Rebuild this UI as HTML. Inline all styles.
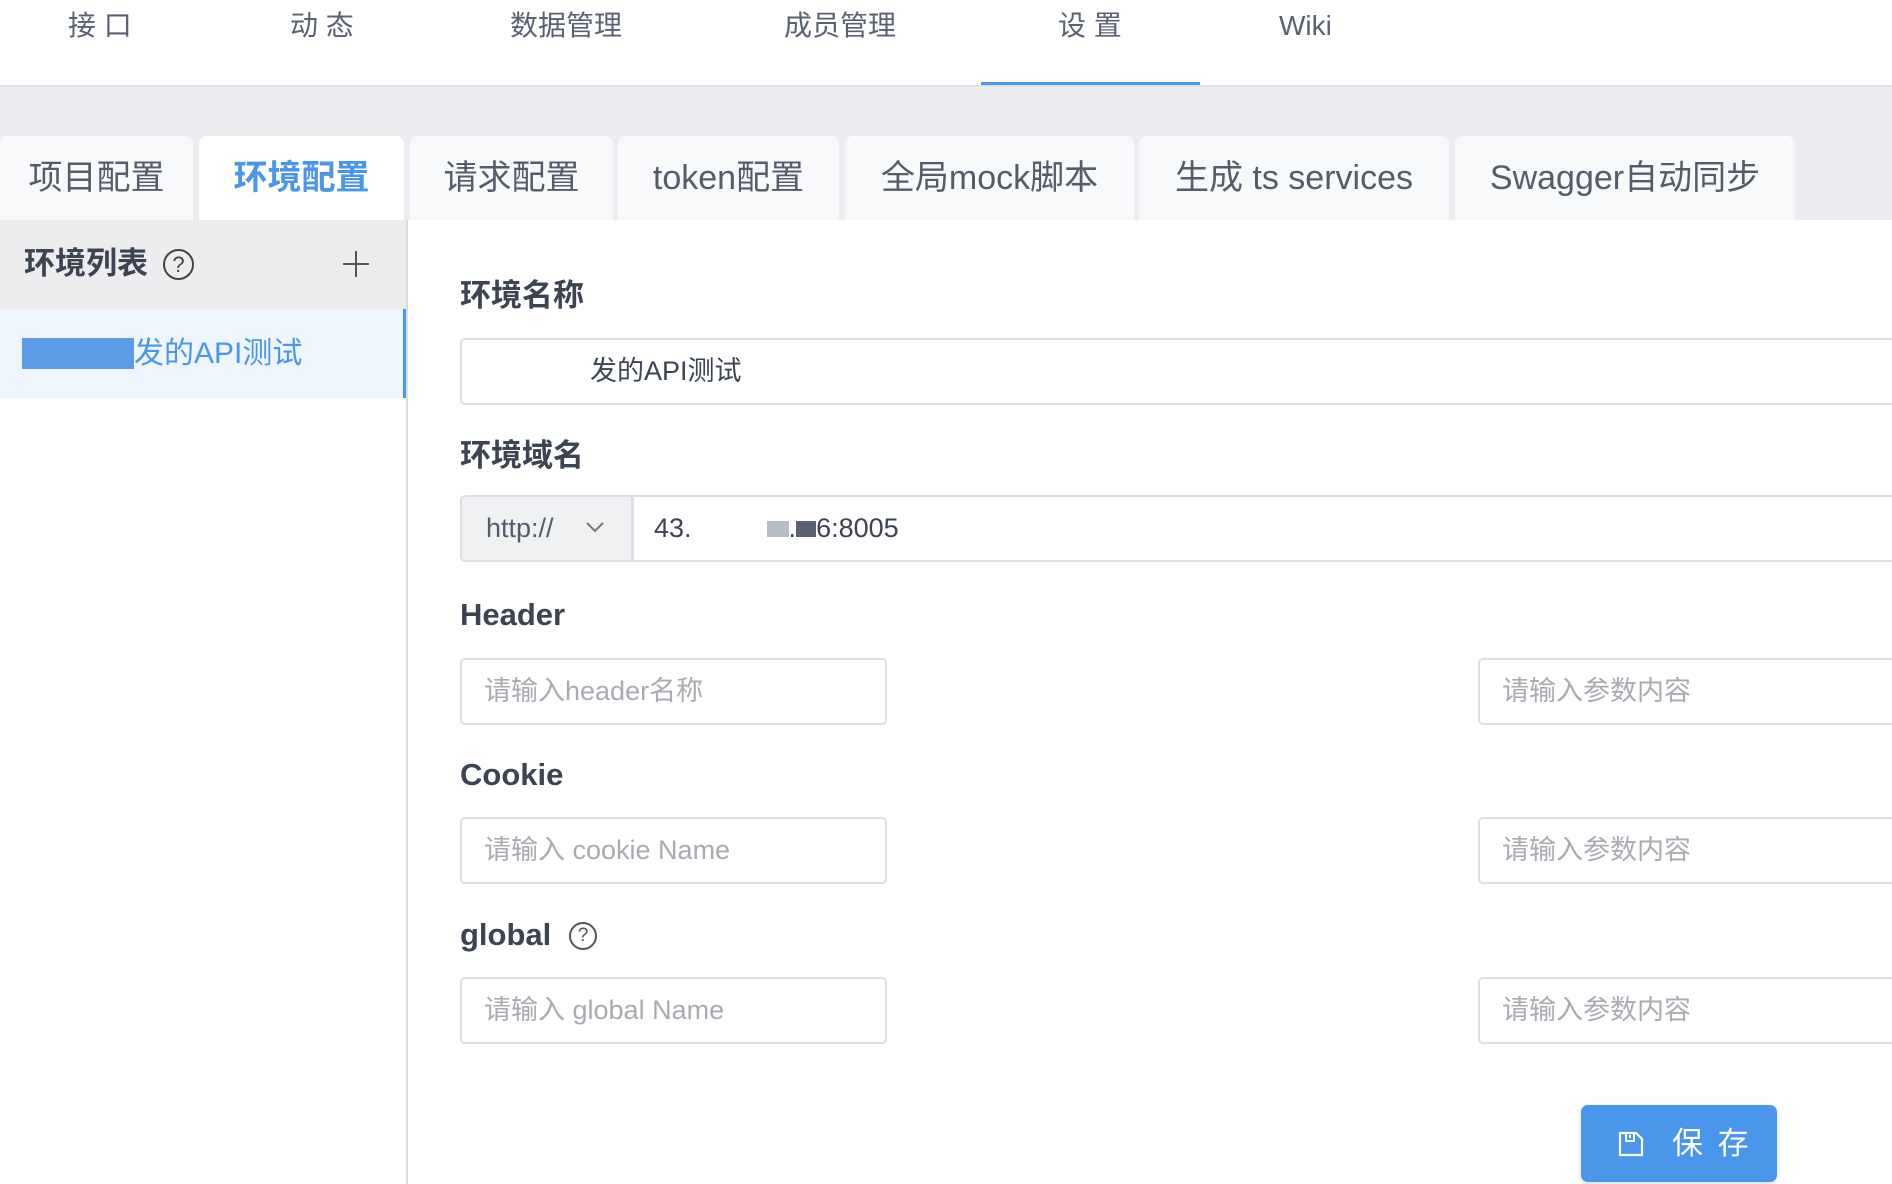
<!DOCTYPE html>
<html><head><meta charset="utf-8"><style>
*{box-sizing:border-box;margin:0;padding:0}
html,body{width:1892px;height:1184px;overflow:hidden}
body{background:#fff;font-family:"Liberation Sans","Noto Sans CJK SC",sans-serif;color:#3c4452;position:relative}
.a{position:absolute;white-space:nowrap}
.nav{font-size:28px;color:#5a6170;top:6px;line-height:40px}
.tab{top:136px;height:84px;background:#f8f9fa;border-radius:8px 8px 0 0;font-size:34px;color:#555c69;line-height:84px;text-align:center}
.lbl{font-size:31px;font-weight:bold;color:#3c4452;line-height:40px;left:460px}
.inp{border:2px solid #dcdfe6;border-radius:5px;height:67px;font-size:27px;line-height:63px;padding-left:22px;color:#a8abb2;background:#fff}
</style></head><body>
<div class="a nav" style="left:68px">接 口</div>
<div class="a nav" style="left:290px">动 态</div>
<div class="a nav" style="left:510px">数据管理</div>
<div class="a nav" style="left:784px">成员管理</div>
<div class="a nav" style="left:1058px">设 置</div>
<div class="a nav" style="left:1279px">Wiki</div>
<div class="a" style="left:981px;top:82px;width:219px;height:5px;background:#4a96ea"></div>
<div class="a" style="left:0;top:86px;width:1892px;height:134px;background:#ecedf0"></div>
<div class="a" style="left:0;top:85px;width:1892px;height:2px;background:#e2e3e6"></div>
<div class="a tab" style="left:0;width:193px">项目配置</div>
<div class="a tab" style="left:199px;width:205px;background:#fff;color:#4a96ea;font-weight:bold;height:86px">环境配置</div>
<div class="a tab" style="left:410px;width:203px">请求配置</div>
<div class="a tab" style="left:618px;width:221px">token配置</div>
<div class="a tab" style="left:845px;width:289px">全局mock脚本</div>
<div class="a tab" style="left:1139px;width:310px">生成 ts services</div>
<div class="a tab" style="left:1455px;width:340px">Swagger自动同步</div>
<div class="a" style="left:0;top:220px;width:406px;height:89px;background:#ededf0"></div>
<div class="a" style="left:24px;top:244px;font-size:31px;font-weight:bold;line-height:40px;color:#3c4452">环境列表</div>
<div class="a" style="left:163px;top:249px;width:31px;height:31px;border:2px solid #444;border-radius:50%;font-size:22px;line-height:27px;text-align:center;color:#444">?</div>
<div class="a" style="left:343px;top:263px;width:26px;height:2px;background:#555"></div>
<div class="a" style="left:355px;top:251px;width:2px;height:26px;background:#555"></div>
<div class="a" style="left:0;top:309px;width:406px;height:89px;background:#eef5fd"></div>
<div class="a" style="left:403px;top:309px;width:4px;height:89px;background:#4a96ea"></div>
<div class="a" style="left:406px;top:220px;width:2px;height:964px;background:#dcdcdc"></div>
<div class="a" style="left:22px;top:334px;font-size:30px;color:#4a96ea;line-height:40px"><span style="background:#5a9de6;color:transparent;font-size:28px">某工某某</span>发的API测试</div>
<div class="a lbl" style="top:276px">环境名称</div>
<div class="a inp" style="left:460px;top:338px;width:1440px;color:#3c4452;padding-left:128px">发的API测试</div>
<div class="a lbl" style="top:436px">环境域名</div>
<div class="a" style="left:460px;top:495px;width:173px;height:67px;background:#f0f1f3;border:2px solid #dcdfe6;border-radius:5px 0 0 5px;font-size:27px;line-height:63px;padding-left:24px;color:#555c69">http://<svg style="position:absolute;left:124px;top:24px" width="18" height="12"><path d="M1 2 L9 10 L17 2" fill="none" stroke="#777" stroke-width="2"/></svg></div>
<div class="a inp" style="left:632px;top:495px;width:1270px;color:#3c4452;border-radius:0;font-size:27px;padding-left:20px">43.<span style="display:inline-block;width:75px"></span><span style="display:inline-block;width:22px;height:16px;background:#b8bcc4"></span>.<span style="display:inline-block;width:20px;height:16px;background:#5a6170"></span>6:8005</div>
<div class="a lbl" style="top:595px">Header</div>
<div class="a inp" style="left:460px;top:658px;width:427px">请输入header名称</div>
<div class="a inp" style="left:1478px;top:658px;width:430px">请输入参数内容</div>
<div class="a lbl" style="top:755px">Cookie</div>
<div class="a inp" style="left:460px;top:817px;width:427px">请输入 cookie Name</div>
<div class="a inp" style="left:1478px;top:817px;width:430px">请输入参数内容</div>
<div class="a lbl" style="top:915px">global</div>
<div class="a" style="left:569px;top:922px;width:28px;height:28px;border:2px solid #555;border-radius:50%;font-size:19px;line-height:24px;text-align:center;color:#555">?</div>
<div class="a inp" style="left:460px;top:977px;width:427px">请输入 global Name</div>
<div class="a inp" style="left:1478px;top:977px;width:430px">请输入参数内容</div>
<div class="a" style="left:1581px;top:1105px;width:196px;height:77px;background:#4a96ea;border-radius:7px;box-shadow:0 2px 6px rgba(0,0,0,.15);color:#fff;font-size:31px;line-height:77px;padding-left:91px;letter-spacing:3px">保&nbsp;存
<svg style="position:absolute;left:37px;top:26px" width="26" height="26"><path d="M2 2 H18 L24 8 V24 H2 Z" fill="none" stroke="#fff" stroke-width="2.2"/><path d="M8 2 V10 H16 V2" fill="none" stroke="#fff" stroke-width="2"/><path d="M12 4 V7" stroke="#fff" stroke-width="2"/></svg></div>
</body></html>
